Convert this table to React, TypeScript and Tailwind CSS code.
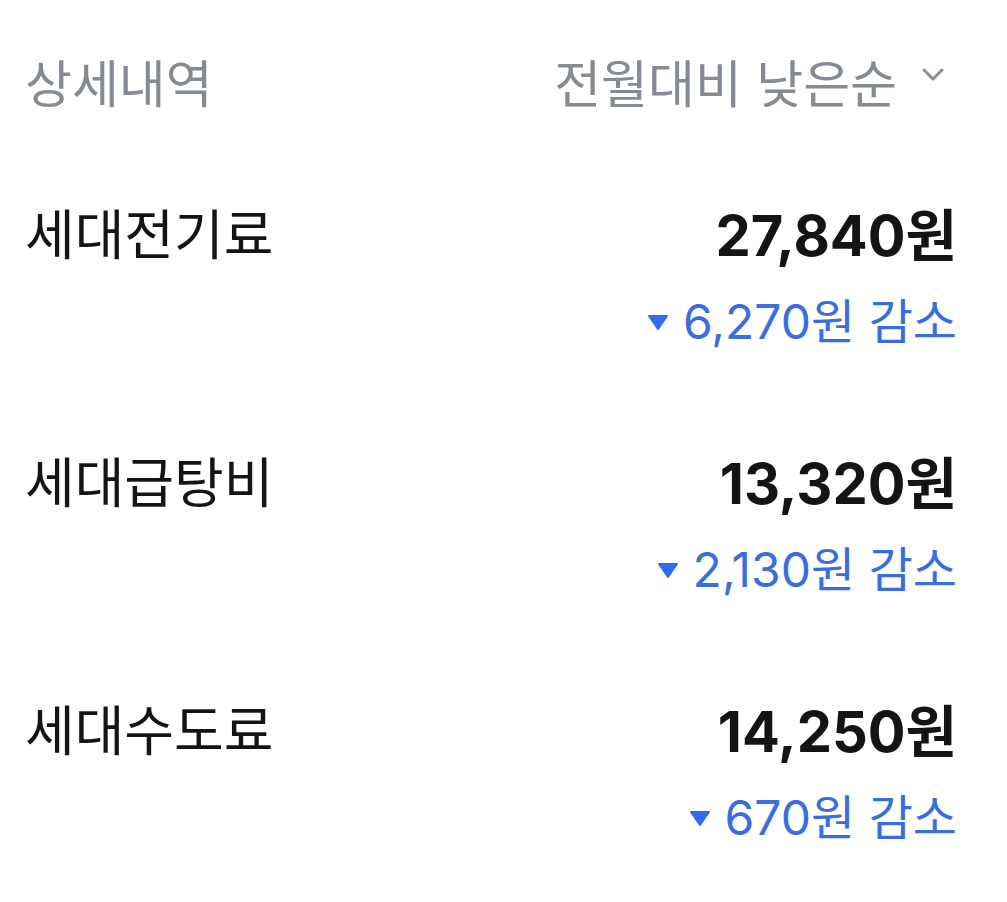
const items = [
  { name: '세대전기료', amount: '27,840원', diff: '6,270원 감소' },
  { name: '세대급탕비', amount: '13,320원', diff: '2,130원 감소' },
  { name: '세대수도료', amount: '14,250원', diff: '670원 감소' },
]

export default function App() {
  return (
    <div
      className="w-[1007px] h-[902px] bg-white pl-[25px] pr-[50px] pt-[48px] text-[#141414]"
      style={{ fontFamily: 'Inter, "Noto Sans CJK KR", "Noto Sans", sans-serif' }}
    >
      <div className="flex items-center justify-between h-[72px] text-[#858a93]">
        <span className="text-[51px] leading-none">상세내역</span>
        <div className="flex items-center">
          <span className="text-[51px] leading-none">전월대비 낮은순</span>
          <svg width="24" height="16" viewBox="0 0 24 16" className="ml-[24px] mr-[12px] mb-[18px]">
            <path d="M3 3 L12 12 L21 3" fill="none" stroke="#8a8f98" strokeWidth="3" strokeLinecap="round" strokeLinejoin="round" />
          </svg>
        </div>
      </div>
      <div className="flex flex-col gap-[76px] mt-[80px]">
        {items.map((it) => (
          <div key={it.name} className="flex justify-between">
            <span className="text-[54px] leading-[72px]">{it.name}</span>
            <div className="flex flex-col items-end">
              <span className="text-[56px] leading-[72px] font-bold">{it.amount}</span>
              <div className="flex items-center text-[#3a6ee0] text-[48px] leading-[100px] pl-[2px]">
                <svg width="22" height="18" viewBox="0 0 22 18" className="mr-[14px]">
                  <path d="M2 3 L20 3 L11 16 Z" fill="#2f6cf3" strokeLinejoin="round" stroke="#2f6cf3" strokeWidth="2" />
                </svg>
                <span>{it.diff}</span>
              </div>
            </div>
          </div>
        ))}
      </div>
    </div>
  )
}
